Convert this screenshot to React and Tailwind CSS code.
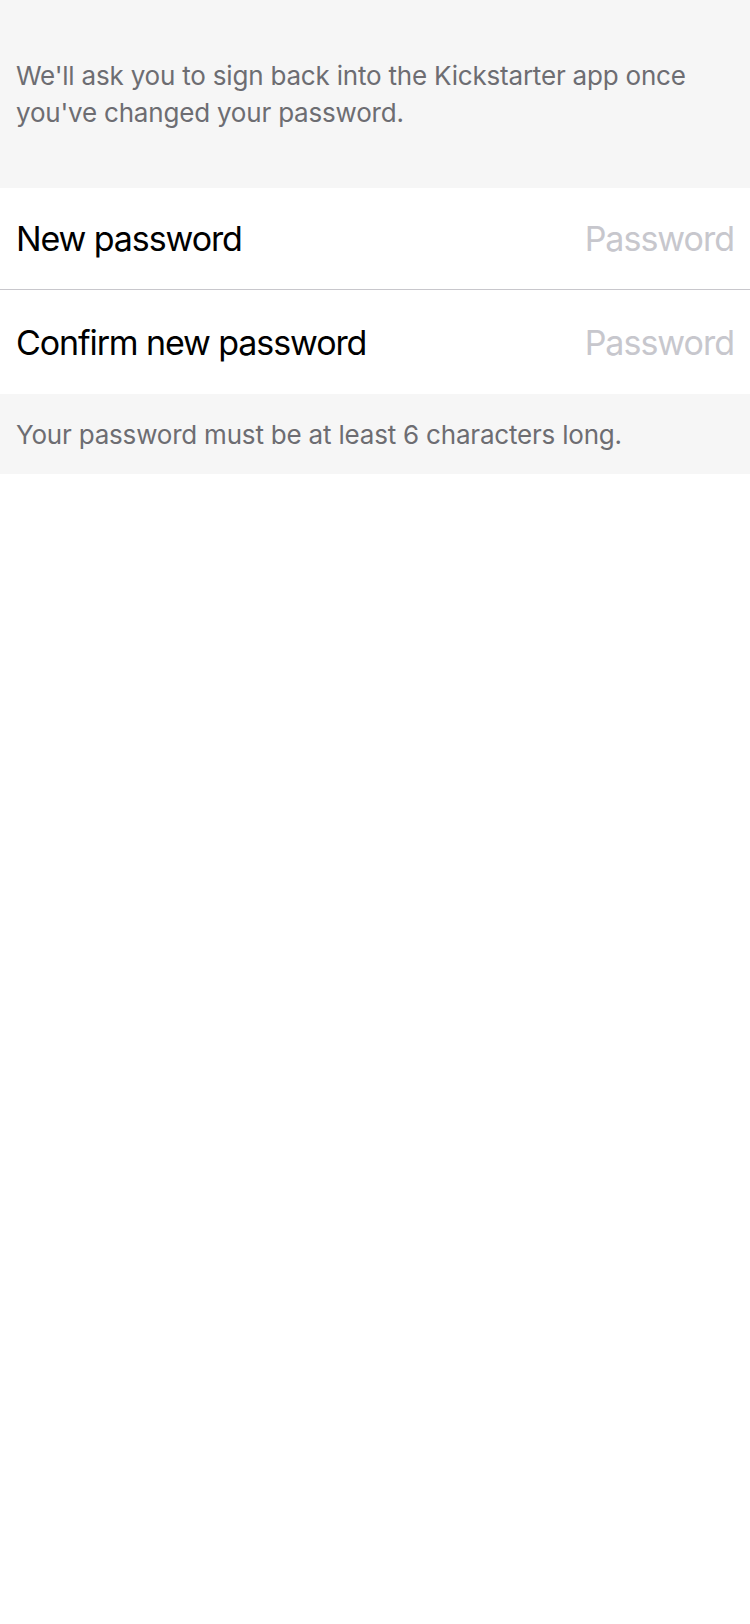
import React from "react";

const Row = ({ label, border }) => (
  <div
    className={
      "flex items-center justify-between px-4 bg-white " +
      (border ? "h-[102px] border-b border-[#c8c7cc]" : "h-[104px]")
    }
  >
    <span className="text-[34px] text-black tracking-[-1.1px]">{label}</span>
    <input
      type="password"
      placeholder="Password"
      className="w-[300px] text-right text-[34px] tracking-[-1px] outline-none bg-transparent placeholder:text-[#c7c7cd]"
    />
  </div>
);

const App = () => {
  return (
    <div className="min-h-[1624px] bg-white" style={{ fontFamily: "Inter, 'Noto Sans', sans-serif" }}>
      <div className="bg-[#f6f6f6] h-[188px] px-4 pt-[57px]">
        <p className="text-[26px] leading-[37px] text-[#6d6d72] tracking-[-0.2px]">
          We'll ask you to sign back into the Kickstarter app once you've changed your password.
        </p>
      </div>
      <Row label="New password" border />
      <Row label="Confirm new password" />
      <div className="bg-[#f6f6f6] h-[80px] px-4 flex items-center">
        <p className="text-[26px] text-[#6d6d72] tracking-[-0.2px]">
          Your password must be at least 6 characters long.
        </p>
      </div>
    </div>
  );
};

export default App;
